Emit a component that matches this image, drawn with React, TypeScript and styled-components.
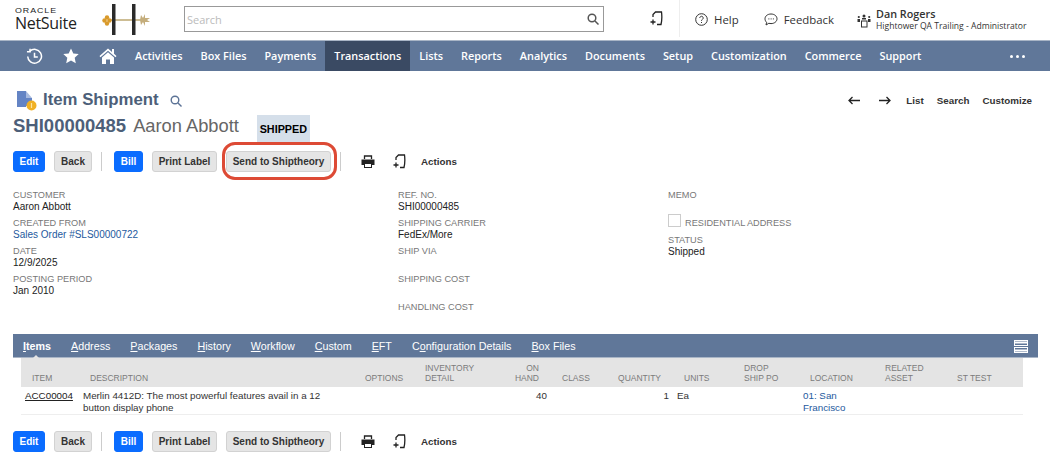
import React from 'react';
import styled, { createGlobalStyle } from 'styled-components';

const GlobalStyle = createGlobalStyle`
  html, body { margin: 0; padding: 0; background: #fff; }
  body { font-family: "Liberation Sans", Arial, sans-serif; overflow: hidden; }
`;

const Page = styled.div`
  width: 1050px;
  height: 470px;
  overflow: hidden;
`;

const Header = styled.header`
  height: 40px;
  display: flex;
  align-items: flex-start;
  font-family: "Open Sans", sans-serif;
  color: #333;
`;

const OracleLogo = styled.div`
  width: 86px;
  padding: 7px 0 0 15px;
  color: #222;
`;

const OracleWord = styled.div`
  font-family: "Liberation Sans", sans-serif;
  font-size: 6.5px;
  line-height: 7px;
  letter-spacing: 0.7px;
  transform: scaleX(1.36);
  transform-origin: left;
`;

const NetSuiteWord = styled.div`
  font-family: "Open Sans", sans-serif;
  font-size: 16px;
  line-height: 18px;
  letter-spacing: -0.3px;
`;

const HouseLogo = styled.svg`
  width: 50px;
  height: 36px;
  margin: 2px 0 0 0;
  flex: none;
`;

const SearchBox = styled.div`
  width: 420px;
  height: 26px;
  margin: 6px 0 0 33px;
  border: 1px solid #999;
  display: flex;
  align-items: center;
  justify-content: space-between;
  padding: 0 4px 0 2px;
  box-sizing: border-box;
  font-size: 11px;
  color: #bbb;
`;

const HeaderIcon = styled.svg`
  flex: none;
`;

const AddSlot = styled.div`
  width: 13px;
  height: 37px;
  margin-left: 46px;
  padding-right: 16px;
  border-right: 1px solid #eee;
  display: flex;
  align-items: center;
`;

const HeaderLink = styled.div<{ $left: number }>`
  display: flex;
  align-items: center;
  gap: 6px;
  height: 38px;
  margin-left: ${(p) => p.$left}px;
  font-size: 11.4px;
`;

const UserBlock = styled.div`
  display: flex;
  align-items: center;
  gap: 5px;
  height: 40px;
  margin-left: 23px;
`;

const UserName = styled.div`
  font-size: 10.8px;
  font-weight: 600;
  line-height: 13px;
  white-space: nowrap;
`;

const UserRole = styled.div`
  font-size: 8.6px;
  line-height: 13px;
  white-space: nowrap;
`;

const Nav = styled.nav`
  height: 30px;
  border-top: 1px solid #a9b5c6;
  background: #607799;
  display: flex;
  align-items: stretch;
  font-family: "Open Sans", sans-serif;
  font-size: 10.85px;
  font-weight: 600;
  color: #fff;
  padding-left: 26px;
`;

const NavIcon = styled.div<{ $w: number }>`
  width: ${(p) => p.$w}px;
  display: flex;
  align-items: center;
  flex: none;
`;

const NavItem = styled.div<{ $active?: boolean }>`
  display: flex;
  align-items: center;
  padding: 0 9px 2px;
  white-space: nowrap;
  background: ${(p) => (p.$active ? '#3a4a63' : 'transparent')};
`;

const NavDots = styled.div`
  margin-left: auto;
  margin-right: 25px;
  display: flex;
  align-items: center;
  gap: 3px;
`;

const Dot = styled.span`
  width: 3px;
  height: 3px;
  border-radius: 50%;
  background: #fff;
`;

const TitleRow = styled.div`
  height: 28px;
  margin-top: 15px;
  padding-left: 16px;
  display: flex;
  align-items: center;
`;

const PageTitle = styled.h1`
  margin: 0 0 0 6px;
  font-size: 16.8px;
  font-weight: 700;
  color: #4d5f79;
`;

const TitleSearch = styled.svg`
  margin: 2px 0 0 11px;
`;

const RightLinks = styled.div`
  margin: 1px 0 0 auto;
  padding-right: 18px;
  display: flex;
  align-items: center;
  gap: 13px;
  font-size: 9.8px;
  font-weight: 700;
  color: #333;
`;

const Arrows = styled.div`
  display: flex;
  gap: 19px;
  margin-right: 2px;
`;

const RecordRow = styled.div`
  height: 28px;
  margin-top: 1px;
  padding-left: 13px;
  display: flex;
  align-items: flex-start;
`;

const RecordId = styled.span`
  font-size: 18.5px;
  line-height: 22px;
  font-weight: 700;
  color: #4d5f79;
`;

const RecordName = styled.span`
  margin-left: 7px;
  font-size: 18.3px;
  line-height: 22px;
  color: #666;
`;

const StatusBadge = styled.div`
  width: 53px;
  height: 28px;
  margin-left: 18px;
  background: #d5dfea;
  color: #000;
  font-size: 10.8px;
  font-weight: 700;
  display: flex;
  align-items: center;
  justify-content: center;
`;

const Toolbar = styled.div<{ $top: number }>`
  margin-top: ${(p) => p.$top}px;
  height: 21px;
  padding-left: 13px;
  display: flex;
  align-items: center;
`;

const ActionButton = styled.button<{ $primary?: boolean; $w: number; $left?: number }>`
  width: ${(p) => p.$w}px;
  height: 21px;
  margin: 0 0 0 ${(p) => p.$left ?? 0}px;
  padding: 0;
  border: 1px solid ${(p) => (p.$primary ? '#0a6cff' : '#d2d2d2')};
  border-radius: 3px;
  background: ${(p) => (p.$primary ? '#0a6cff' : '#e5e5e5')};
  color: ${(p) => (p.$primary ? '#fff' : '#333')};
  font-family: "Liberation Sans", sans-serif;
  font-size: 10px;
  font-weight: 700;
`;

const RingWrap = styled.div`
  position: relative;
  margin-left: 9px;
  display: flex;
`;

const Ring = styled.div`
  position: absolute;
  inset: -9px -6px -8px -4px;
  border: 3px solid #dd4a35;
  border-radius: 13px;
  pointer-events: none;
`;

const Divider = styled.span<{ $left: number }>`
  width: 1px;
  height: 19px;
  margin-left: ${(p) => p.$left}px;
  background: #ccc;
  flex: none;
`;

const ToolIcon = styled.svg<{ $left: number }>`
  margin-left: ${(p) => p.$left}px;
  flex: none;
`;

const ActionsText = styled.span`
  margin-left: 15px;
  font-size: 9.8px;
  font-weight: 700;
  color: #333;
`;

const FieldGrid = styled.div`
  margin-top: 18px;
  height: 144px;
  padding-left: 13px;
  display: grid;
  grid-template-columns: 385px 270px 1fr;
`;

const FieldColumn = styled.div`
  display: flex;
  flex-direction: column;
`;

const Field = styled.div`
  height: 28px;
`;

const FieldLabel = styled.div`
  font-size: 9.2px;
  line-height: 11px;
  color: #777;
`;

const FieldValue = styled.div<{ $link?: boolean }>`
  font-size: 10px;
  line-height: 11px;
  color: ${(p) => (p.$link ? '#255a9e' : '#222')};
`;

const CheckRow = styled.div`
  height: 17px;
  display: flex;
  align-items: center;
  gap: 4px;
  margin-top: -6px;
  margin-bottom: 6px;
`;

const CheckBox = styled.span`
  width: 11px;
  height: 11px;
  border: 1px solid #ccc;
  flex: none;
`;

const CheckLabel = styled(FieldLabel)`
  margin-top: 6px;
`;

const TabBar = styled.div`
  margin: 0 12px 0 13px;
  height: 24px;
  padding: 1px 0 0 10px;
  background: #607799;
  border-bottom: 1px solid #a9b5c6;
  box-sizing: border-box;
  display: flex;
  align-items: center;
  gap: 20px;
  color: #fff;
  font-size: 10.72px;
`;

const Tab = styled.span<{ $active?: boolean }>`
  position: relative;
  white-space: nowrap;
  font-weight: ${(p) => (p.$active ? 700 : 400)};
  u { text-underline-offset: 1px; }
  ${(p) =>
    p.$active
      ? `&::after {
    content: '';
    position: absolute;
    left: 9px;
    bottom: -7px;
    border: 4px solid transparent;
    border-top: 0;
    border-bottom-color: #e4e4e4;
  }`
      : ''}
`;

const CollapseIcon = styled.svg`
  margin-left: auto;
  margin-right: 10px;
`;

const ItemTable = styled.table`
  margin-left: 21px;
  width: 1002px;
  table-layout: fixed;
  border-collapse: collapse;
  border-bottom: 1px solid #eee;
`;

const HeadCell = styled.th<{ $right?: number }>`
  background: #e4e4e4;
  height: 29px;
  padding: 0 ${(p) => p.$right ?? 12}px 4px ${(p) => (p.$right ? 0 : 11)}px;
  box-sizing: border-box;
  vertical-align: bottom;
  text-align: ${(p) => (p.$right ? 'right' : 'left')};
  font-size: 8.5px;
  line-height: 10px;
  font-weight: 400;
  color: #7b7b7b;
  white-space: nowrap;
`;

const BodyCell = styled.td<{ $right?: boolean; $link?: boolean }>`
  height: 26px;
  padding: 3px 4px 0;
  box-sizing: border-box;
  vertical-align: top;
  text-align: ${(p) => (p.$right ? 'right' : 'left')};
  font-size: 9.8px;
  line-height: 12px;
  color: ${(p) => (p.$link ? '#255a9e' : '#333')};
`;

const ItemLink = styled.span`
  color: #222;
  text-decoration: underline;
`;

const NAV = ['Activities', 'Box Files', 'Payments', 'Transactions', 'Lists', 'Reports', 'Analytics', 'Documents', 'Setup', 'Customization', 'Commerce', 'Support'];

const TABS: [string, string, string][] = [
  ['', 'I', 'tems'],
  ['', 'A', 'ddress'],
  ['', 'P', 'ackages'],
  ['', 'H', 'istory'],
  ['', 'W', 'orkflow'],
  ['', 'C', 'ustom'],
  ['', 'E', 'FT'],
  ['C', 'o', 'nfiguration Details'],
  ['', 'B', 'ox Files'],
];

const COLS = [58, 275, 60, 76, 61, 61, 61, 60, 66, 75, 72, 77];

const AddIcon = ({ left }: { left: number }) => (
  <ToolIcon $left={left} width="13" height="15" viewBox="0 0 13 15" fill="none" stroke="#222" strokeWidth="1.3">
    <path d="M3 6V3.5L5.5 1H11.5C12 4.5 12 9 11 13.5H7" />
    <path d="M3 8.5v5M0.5 11h5" />
  </ToolIcon>
);

const PrintIcon = ({ left }: { left: number }) => (
  <ToolIcon $left={left} width="14" height="13" viewBox="0 0 14 13" fill="none">
    <path d="M3.5 4V1h7v3" stroke="#222" strokeWidth="1.3" />
    <path d="M0.5 4.5h13v5.5h-2.5V8H3v2H0.5z" fill="#222" />
    <rect x="3.5" y="8.5" width="7" height="4" stroke="#222" strokeWidth="1" />
  </ToolIcon>
);

const Toolbuttons = ({ ring }: { ring?: boolean }) => (
  <>
    <ActionButton $primary $w={32}>Edit</ActionButton>
    <ActionButton $w={38} $left={9}>Back</ActionButton>
    <Divider $left={9} />
    <ActionButton $primary $w={29} $left={12}>Bill</ActionButton>
    <ActionButton $w={65} $left={9}>Print Label</ActionButton>
    <RingWrap>
      <ActionButton $w={105}>Send to Shiptheory</ActionButton>
      {ring && <Ring />}
    </RingWrap>
    <Divider $left={9} />
    <PrintIcon left={20} />
    <AddIcon left={18} />
    <ActionsText>Actions</ActionsText>
  </>
);

const App: React.FC = () => (
  <Page>
    <GlobalStyle />
    <Header>
      <OracleLogo>
        <OracleWord>ORACLE</OracleWord>
        <NetSuiteWord>NetSuite</NetSuiteWord>
      </OracleLogo>
      <HouseLogo viewBox="0 0 50 36">
        <path d="M8 18H44" stroke="#cdbd94" strokeWidth="2" />
        <rect x="11" y="2" width="3.5" height="31" fill="#2a2a2a" />
        <rect x="31" y="2" width="3.5" height="31" fill="#2a2a2a" />
        <circle cx="6" cy="15.5" r="2.2" fill="#d99a2b" />
        <circle cx="6" cy="21.5" r="2.2" fill="#d99a2b" />
        <circle cx="3.5" cy="18.5" r="2.2" fill="#d99a2b" />
        <circle cx="8.5" cy="18.5" r="2.2" fill="#d99a2b" />
        <path d="M39 18l1-5 2 3 2-4 0 4 5 0-3 2 3 2-5 0 0 4-2-4-2 3z" fill="#c4ad7c" />
      </HouseLogo>
      <SearchBox>
        Search
        <HeaderIcon width="12" height="12" viewBox="0 0 12 12" fill="none" stroke="#555" strokeWidth="1.5">
          <circle cx="5" cy="5" r="3.8" />
          <path d="M8 8l3.5 3.5" />
        </HeaderIcon>
      </SearchBox>
      <AddSlot>
        <AddIcon left={0} />
      </AddSlot>
      <HeaderLink $left={15}>
        <HeaderIcon width="13" height="13" viewBox="0 0 13 13" fill="none" stroke="#333">
          <circle cx="6.5" cy="6.5" r="5.8" />
          <path d="M4.8 5a1.7 1.7 0 1 1 2.6 1.4c-.6.4-.9.7-.9 1.4M6.5 9v1" />
        </HeaderIcon>
        Help
      </HeaderLink>
      <HeaderLink $left={25}>
        <HeaderIcon width="14" height="13" viewBox="0 0 14 13" fill="none" stroke="#333">
          <path d="M7 1c3.3 0 6 2 6 4.8s-2.7 4.8-6 4.8c-.8 0-1.5-.1-2.2-.3L2 12l.6-2.7C1.6 8.4 1 7.2 1 5.8 1 3 3.7 1 7 1z" />
          <path d="M4.5 5.9h.8M6.7 5.9h.8M8.9 5.9h.8" strokeWidth="1.2" />
        </HeaderIcon>
        Feedback
      </HeaderLink>
      <UserBlock>
        <HeaderIcon width="14" height="15" viewBox="0 0 14 15" fill="#333">
          <rect x="4.5" y="8" width="5.5" height="6" fill="none" stroke="#333" />
          <circle cx="7" cy="3" r="1.5" />
          <rect x="5" y="5" width="4" height="1.5" />
          <circle cx="1.8" cy="4" r="1.1" />
          <rect x="0.5" y="6" width="2.5" height="3" />
          <circle cx="12.2" cy="4" r="1.1" />
          <rect x="11" y="6" width="2.5" height="3" />
        </HeaderIcon>
        <div>
          <UserName>Dan Rogers</UserName>
          <UserRole>Hightower QA Trailing - Administrator</UserRole>
        </div>
      </UserBlock>
    </Header>

    <Nav>
      <NavIcon $w={37}>
        <svg width="17" height="17" viewBox="0 0 18 18" fill="none" stroke="#fff" strokeWidth="1.6">
          <path d="M4 3.5A7.3 7.3 0 1 1 1.8 9" />
          <path d="M4.3 0.8v3.2H1" />
          <path d="M9 5v4.5h3.5" />
        </svg>
      </NavIcon>
      <NavIcon $w={36}>
        <svg width="16" height="16" viewBox="0 0 16 16" fill="#fff">
          <path d="M8 0.5l2.3 5 5.4.6-4 3.7 1.1 5.4L8 12.4l-4.8 2.8 1.1-5.4-4-3.7 5.4-.6z" />
        </svg>
      </NavIcon>
      <NavIcon $w={27}>
        <svg width="18" height="17" viewBox="0 0 18 17" fill="#fff">
          <path d="M9 0.5L0.5 8l1 1.2L9 2.7l7.5 6.5 1-1.2-2.5-2.2V1h-2v3z" />
          <path d="M3 9.5L9 4.3l6 5.2V16h-4v-4.5H7V16H3z" />
        </svg>
      </NavIcon>
      {NAV.map((label) => (
        <NavItem key={label} $active={label === 'Transactions'}>{label}</NavItem>
      ))}
      <NavDots><Dot /><Dot /><Dot /></NavDots>
    </Nav>

    <TitleRow>
      <svg width="21" height="21" viewBox="0 0 21 21">
        <path d="M1 1h9v16H1z" fill="#6484c4" />
        <path d="M10 1l6 7h-6z" fill="#a9bbdf" />
        <path d="M10 8h6v8H10z" fill="#6484c4" />
        <circle cx="15.5" cy="15.5" r="5" fill="#f0b024" />
        <path d="M15.5 13v5" stroke="#fce3a0" strokeWidth="1.2" />
      </svg>
      <PageTitle>Item Shipment</PageTitle>
      <TitleSearch width="12" height="12" viewBox="0 0 12 12" fill="none" stroke="#5c7396" strokeWidth="1.4">
        <circle cx="5" cy="5" r="3.8" />
        <path d="M8 8l3.5 3.5" />
      </TitleSearch>
      <RightLinks>
        <Arrows>
          <svg width="12" height="9" viewBox="0 0 12 9" fill="none" stroke="#222" strokeWidth="1.3"><path d="M12 4.5H1M4.5 1L1 4.5 4.5 8" /></svg>
          <svg width="12" height="9" viewBox="0 0 12 9" fill="none" stroke="#222" strokeWidth="1.3"><path d="M0 4.5h11M7.5 1L11 4.5 7.5 8" /></svg>
        </Arrows>
        <span>List</span>
        <span>Search</span>
        <span>Customize</span>
      </RightLinks>
    </TitleRow>

    <RecordRow>
      <RecordId>SHI00000485</RecordId>
      <RecordName>Aaron Abbott</RecordName>
      <StatusBadge>SHIPPED</StatusBadge>
    </RecordRow>

    <Toolbar $top={8}><Toolbuttons ring /></Toolbar>

    <FieldGrid>
      <FieldColumn>
        <Field><FieldLabel>CUSTOMER</FieldLabel><FieldValue>Aaron Abbott</FieldValue></Field>
        <Field><FieldLabel>CREATED FROM</FieldLabel><FieldValue $link>Sales Order #SLS00000722</FieldValue></Field>
        <Field><FieldLabel>DATE</FieldLabel><FieldValue>12/9/2025</FieldValue></Field>
        <Field><FieldLabel>POSTING PERIOD</FieldLabel><FieldValue>Jan 2010</FieldValue></Field>
      </FieldColumn>
      <FieldColumn>
        <Field><FieldLabel>REF. NO.</FieldLabel><FieldValue>SHI00000485</FieldValue></Field>
        <Field><FieldLabel>SHIPPING CARRIER</FieldLabel><FieldValue>FedEx/More</FieldValue></Field>
        <Field><FieldLabel>SHIP VIA</FieldLabel></Field>
        <Field><FieldLabel>SHIPPING COST</FieldLabel></Field>
        <Field><FieldLabel>HANDLING COST</FieldLabel></Field>
      </FieldColumn>
      <FieldColumn>
        <Field><FieldLabel>MEMO</FieldLabel></Field>
        <CheckRow><CheckBox /><CheckLabel>RESIDENTIAL ADDRESS</CheckLabel></CheckRow>
        <Field><FieldLabel>STATUS</FieldLabel><FieldValue>Shipped</FieldValue></Field>
      </FieldColumn>
    </FieldGrid>

    <TabBar>
      {TABS.map(([pre, key, post], i) => (
        <Tab key={key + post} $active={i === 0}>{pre}<u>{key}</u>{post}</Tab>
      ))}
      <CollapseIcon width="14" height="13" viewBox="0 0 14 13" fill="none" stroke="#fff">
        <rect x="0.5" y="0.5" width="13" height="5" />
        <rect x="0.5" y="7.5" width="13" height="5" />
        <path d="M0 2.5h14M0 10.5h14" strokeWidth="2" />
      </CollapseIcon>
    </TabBar>

    <ItemTable>
      <colgroup>
        {COLS.map((w, i) => <col key={i} style={{ width: w }} />)}
      </colgroup>
      <thead>
        <tr>
          <HeadCell>ITEM</HeadCell>
          <HeadCell>DESCRIPTION</HeadCell>
          <HeadCell>OPTIONS</HeadCell>
          <HeadCell>INVENTORY<br />DETAIL</HeadCell>
          <HeadCell $right={12}>ON<br />HAND</HeadCell>
          <HeadCell>CLASS</HeadCell>
          <HeadCell $right={12}>QUANTITY</HeadCell>
          <HeadCell>UNITS</HeadCell>
          <HeadCell>DROP<br />SHIP PO</HeadCell>
          <HeadCell>LOCATION</HeadCell>
          <HeadCell>RELATED<br />ASSET</HeadCell>
          <HeadCell>ST TEST</HeadCell>
        </tr>
      </thead>
      <tbody>
        <tr>
          <BodyCell><ItemLink>ACC00004</ItemLink></BodyCell>
          <BodyCell>Merlin 4412D: The most powerful features avail in a 12<br />button display phone</BodyCell>
          <BodyCell />
          <BodyCell />
          <BodyCell $right>40</BodyCell>
          <BodyCell />
          <BodyCell $right>1</BodyCell>
          <BodyCell>Ea</BodyCell>
          <BodyCell />
          <BodyCell $link>01: San Francisco</BodyCell>
          <BodyCell />
          <BodyCell />
        </tr>
      </tbody>
    </ItemTable>

    <Toolbar $top={16}><Toolbuttons /></Toolbar>
  </Page>
);

export default App;
